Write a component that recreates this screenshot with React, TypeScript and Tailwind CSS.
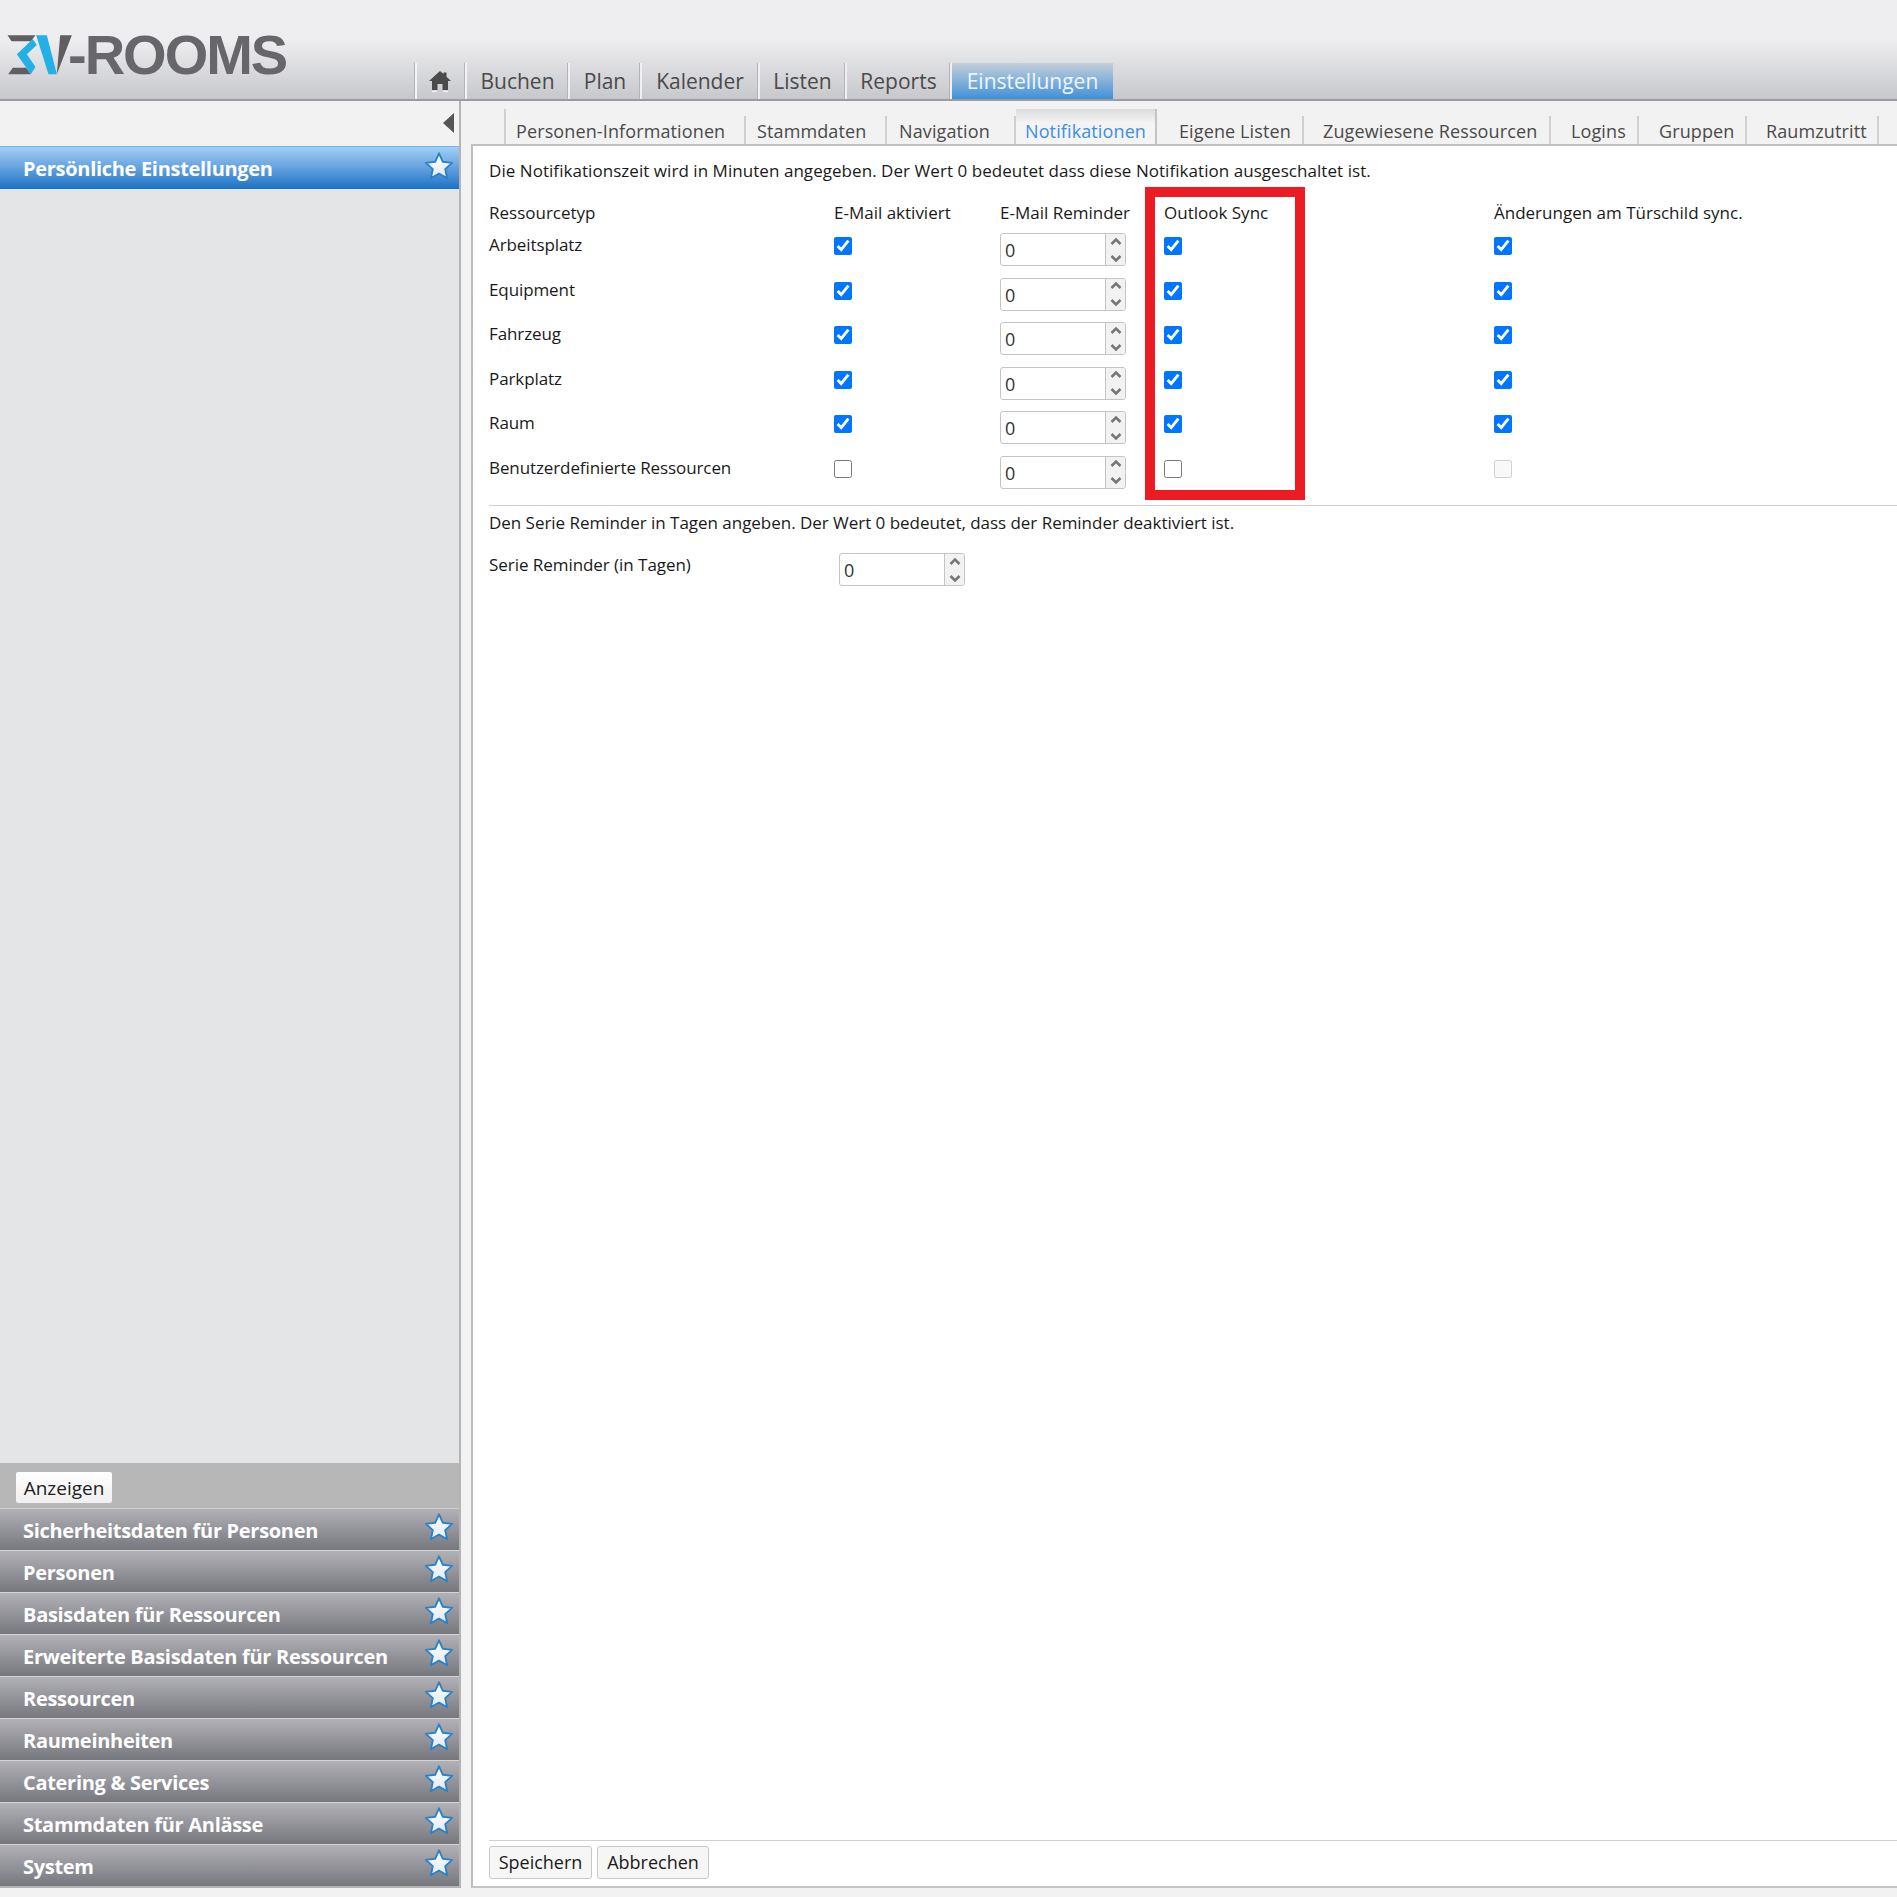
const FONT = "font-['Open_Sans','Noto_Sans',sans-serif]";

const NAV = [
  { label: "Buchen", w: "w-[103px]" },
  { label: "Plan", w: "w-[72px]" },
  { label: "Kalender", w: "w-[118px]" },
  { label: "Listen", w: "w-[87px]" },
  { label: "Reports", w: "w-[105px]" },
];

const TABS = [
  { label: "Personen-Informationen", w: "w-[240px]", pl: "pl-[10px]" },
  { label: "Stammdaten", w: "w-[141px]", pl: "pl-[11px]" },
  { label: "Navigation", w: "w-[129px]", pl: "pl-[12px]" },
];

const TABS_AFTER = [
  { label: "Eigene Listen", w: "w-[147px]", pl: "pl-[22px]" },
  { label: "Zugewiesene Ressourcen", w: "w-[247px]", pl: "pl-[19px]" },
  { label: "Logins", w: "w-[88px]", pl: "pl-[20px]" },
  { label: "Gruppen", w: "w-[108px]", pl: "pl-[20px]" },
  { label: "Raumzutritt", w: "w-[132px]", pl: "pl-[19px]" },
];

const ROWS = [
  { label: "Arbeitsplatz", on: true },
  { label: "Equipment", on: true },
  { label: "Fahrzeug", on: true },
  { label: "Parkplatz", on: true },
  { label: "Raum", on: true },
  { label: "Benutzerdefinierte Ressourcen", on: false },
];

const GROUPS = [
  "Sicherheitsdaten für Personen",
  "Personen",
  "Basisdaten für Ressourcen",
  "Erweiterte Basisdaten für Ressourcen",
  "Ressourcen",
  "Raumeinheiten",
  "Catering & Services",
  "Stammdaten für Anlässe",
  "System",
];

function Star() {
  return (
    <svg width="30" height="30" viewBox="0 0 28 28" className="shrink-0 -mt-[5px]">
      <defs>
        <linearGradient id="starFill" x1="0" y1="0" x2="0" y2="1">
          <stop offset="0" stopColor="#ffffff" />
          <stop offset="1" stopColor="#dfe9f3" />
        </linearGradient>
      </defs>
      <path
        d="M14 2.2l3.6 7.9 8.6 1-6.4 5.8 1.8 8.500L14 21.100l-7.600 4.300 1.800-8.500-6.400-5.800 8.600-1z"
        fill="url(#starFill)"
        stroke="#2b82c9"
        strokeWidth="1.8"
        strokeLinejoin="round"
      />
    </svg>
  );
}

function Spinner({ w }: { w: string }) {
  return (
    <div className={`${w} h-[33px] flex border border-[#c4c4c4] rounded-[3px] bg-white`}>
      <div className="flex-1 pl-[4px] text-[18px] leading-[33px] text-[#333]">0</div>
      <div className="w-[20px] border-l border-[#c4c4c4] bg-[#f2f2f2] rounded-r-[3px] flex flex-col items-center justify-center">
        <svg width="14" height="15" viewBox="0 0 14 15" fill="none" stroke="#777" strokeWidth="2.600">
          <path d="M2.500 9l4.500-4.500 4.500 4.500" />
        </svg>
        <svg width="14" height="15" viewBox="0 0 14 15" fill="none" stroke="#777" strokeWidth="2.600">
          <path d="M2.500 6l4.500 4.500 4.500-4.500" />
        </svg>
      </div>
    </div>
  );
}

function Check({ on, disabled }: { on: boolean; disabled?: boolean }) {
  return (
    <input
      type="checkbox"
      defaultChecked={on}
      disabled={disabled}
      className="w-[18px] h-[18px] m-0 block"
    />
  );
}

function Logo() {
  return (
    <div className="flex items-start pt-[25px] h-[99px] w-[415px] shrink-0">
      <svg width="77" height="60" viewBox="0 0 230 180" className="shrink-0">
        <path d="M22 31h84l-14 18H34z M24 148l14-20h40l14 20z" fill="#5f5f63" />
        <path d="M98 42l12 18-30 28 26 38-14 22-42-60z" fill="#22b0e6" />
        <path d="M180 31h35l-45 117z" fill="#5f5f63" />
        <path d="M108 31h32l30 117h-25z" fill="#22b0e6" />
      </svg>
      <span className="-ml-[9px] font-['Liberation_Sans',sans-serif] font-bold text-[56px] leading-[60px] tracking-[-2px] text-[#67676b]">
        -ROOMS
      </span>
    </div>
  );
}

function Header() {
  return (
    <header className="h-[101px] flex border-b-2 border-[#9c9c9f] bg-gradient-to-b from-[#eeeef0] from-40% to-[#c7c8cc]">
      <Logo />
      <nav className="flex items-end h-[99px]">
        <div className="w-[52px] h-[36px] flex items-center justify-center pr-[2px] border-x-2 border-[#f4f4f4] shadow-[inset_-1px_0_0_#b4b4b8,-1px_0_0_#b4b4b8]">
          <svg width="22" height="21" viewBox="0 0 22 21">
            <path d="M11 0l3.500 3V1.500h3v4.300l4.500 4.200h-3v9h-5.500v-6h-5v6H3v-9H0z" fill="#4a4a4a" />
            <path d="M3 20.300h5M14 20.300h5" stroke="#ffffff" strokeWidth="1" />
          </svg>
        </div>
        {NAV.map((n) => (
          <div
            key={n.label}
            className={`${n.w} h-[36px] pt-[1px] flex items-center justify-center border-r-2 border-[#f0f0f0] shadow-[inset_-1px_0_0_#b4b4b8] text-[21px] text-[#4a4a4a]`}
          >
            {n.label}
          </div>
        ))}
        <div className="w-[161px] h-[36px] pt-[1px] flex items-center justify-center text-[21px] text-[#eef6fd] bg-gradient-to-b from-[#c3ced8] to-[#3a90d9]">
          Einstellungen
        </div>
      </nav>
    </header>
  );
}

function Sidebar() {
  return (
    <aside className="w-[461px] shrink-0 flex flex-col border-r-2 border-b-2 border-[#b4b4b4]">
      <div className="h-[45px] flex justify-end items-start pt-[12px] pr-[5px]">
        <div className="w-0 h-0 border-y-[10px] border-y-transparent border-r-[11px] border-r-[#555]" />
      </div>
      <div className="h-[43px] flex items-center justify-between pl-[23px] pr-[5px] border-t border-[#6db2f2] bg-gradient-to-b from-[#a3cff6] to-[#1272c4] text-[20px] font-bold tracking-[-0.3px] text-white">
        <span className="pt-[2px]">Persönliche Einstellungen</span>
        <Star />
      </div>
      <div className="flex-1 bg-[#e4e5e7]" />
      <div className="h-[46px] bg-[#b7b7b7] flex pt-[9px] pl-[16px] border-b border-[#cfcfcf]">
        <button className="h-[31px] w-[96px] pt-[2px] rounded-[2px] bg-gradient-to-b from-white to-[#efefef] text-[19px] text-[#222]">
          Anzeigen
        </button>
      </div>
      <div className="flex flex-col gap-[1px] bg-[#d4d4d6]">
        {GROUPS.map((g) => (
          <div
            key={g}
            className="h-[41px] flex items-center justify-between pl-[23px] pr-[5px] bg-gradient-to-b from-[#b1b1b6] to-[#77787e] text-[20px] font-bold tracking-[-0.3px] text-white"
          >
            <span className="pt-[2px]">{g}</span>
            <Star />
          </div>
        ))}
      </div>
    </aside>
  );
}

function SubTab({ label, w, pl }: { label: string; w: string; pl: string }) {
  return (
    <div className={`${w} ${pl} h-[28px] pt-[3px] flex items-center border-r-2 border-[#d0d0d0] text-[18px] tracking-[0.12px] text-[#4a4a4a]`}>
      {label}
    </div>
  );
}

function Main() {
  return (
    <main className="flex-1 min-w-0 flex flex-col ml-[10px]">
      <div className="h-[45px] flex items-end pl-[33px] border-b-2 border-[#c0c0c0] relative">
        <div className="flex items-end border-l-2 border-[#d0d0d0]">
          {TABS.map((t) => (
            <SubTab key={t.label} {...t} />
          ))}
          <div className="w-[141px] h-[35px] pt-[9px] flex items-center justify-center text-[18px] tracking-[0.12px] text-[#3d8fe0] bg-gradient-to-b from-[#dcdcdc] to-[#f4f4f4] to-40% border-r-2 border-[#c4c4c4]">
            Notifikationen
          </div>
          {TABS_AFTER.map((t) => (
            <SubTab key={t.label} {...t} />
          ))}
        </div>
      </div>
      <div className="flex-1 flex flex-col bg-white border-l-2 border-[#bdbdbd] border-b-2 border-b-[#c4c4c4] pl-[16px] text-[17px] text-[#1a1a1a] relative">
        <p className="h-[46px] pt-[6px] leading-[38px] tracking-[0.05px]">
          Die Notifikationszeit wird in Minuten angegeben. Der Wert 0 bedeutet dass diese Notifikation ausgeschaltet ist.
        </p>
        <div className="grid grid-cols-[345px_166px_164px_330px_1fr] h-[41px] items-center">
          <span>Ressourcetyp</span>
          <span>E-Mail aktiviert</span>
          <span>E-Mail Reminder</span>
          <span>Outlook Sync</span>
          <span>Änderungen am Türschild sync.</span>
        </div>
        {ROWS.map((r, i) => (
          <div key={r.label} className="grid grid-cols-[345px_166px_164px_330px_1fr] h-[44.500px]">
            <span className="leading-[24px] tracking-[-0.1px]">{r.label}</span>
            <div className="pt-[4px]"><Check on={r.on} /></div>
            <Spinner w="w-[126px]" />
            <div className="pt-[4px]"><Check on={r.on} /></div>
            <div className="pt-[4px]"><Check on={r.on} disabled={i === 5} /></div>
          </div>
        ))}
        <div className="border-t border-[#d0d0d0] mt-[5px] h-[34px] leading-[34px] tracking-[-0.03px]">
          Den Serie Reminder in Tagen angeben. Der Wert 0 bedeutet, dass der Reminder deaktiviert ist.
        </div>
        <div className="flex mt-[14px]">
          <span className="w-[350px] leading-[24px] tracking-[-0.05px]">Serie Reminder (in Tagen)</span>
          <Spinner w="w-[126px]" />
        </div>
        <div className="flex-1" />
        <div className="h-[46px] border-t border-[#d0d0d0] flex items-start pt-[5px] gap-[5px]">
          <button className="w-[103px] h-[33px] border border-[#c8c8c8] rounded-[3px] bg-[#f6f6f6] text-[18px]">Speichern</button>
          <button className="w-[112px] h-[33px] border border-[#c8c8c8] rounded-[3px] bg-[#f6f6f6] text-[18px]">Abbrechen</button>
        </div>
        <div className="absolute left-[672px] top-[41px] w-[160px] h-[313px] border-[10px] border-[#ed1c24]" />
      </div>
    </main>
  );
}

export default function App() {
  return (
    <div className={`${FONT} h-[1897px] flex flex-col bg-[#f2f2f2]`}>
      <Header />
      <div className="h-[1787px] flex">
        <Sidebar />
        <Main />
      </div>
    </div>
  );
}
